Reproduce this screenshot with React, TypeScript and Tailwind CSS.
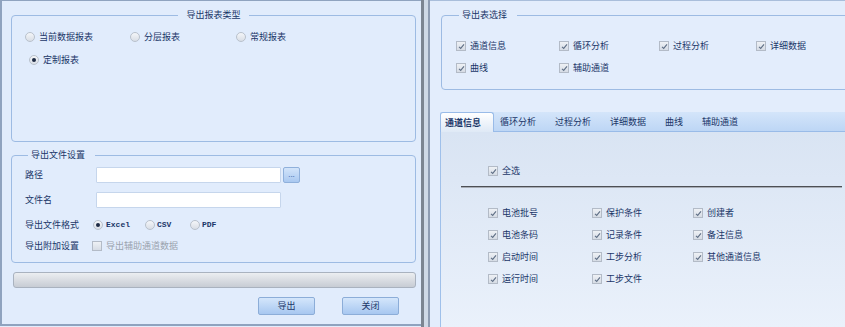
import React from "react";

const font = { fontFamily: '"Noto Sans CJK SC", "Noto Sans", sans-serif' };

const tableOptions = [
  ["通道信息", "循环分析", "过程分析", "详细数据"],
  ["曲线", "辅助通道"],
];

const tabs = ["循环分析", "过程分析", "详细数据", "曲线", "辅助通道"];

const fields = [
  ["电池批号", "保护条件", "创建者"],
  ["电池条码", "记录条件", "备注信息"],
  ["启动时间", "工步分析", "其他通道信息"],
  ["运行时间", "工步文件"],
];

function Radio({ checked = false }: { checked?: boolean }) {
  return (
    <span className="w-[10px] h-[10px] rounded-full border border-[#b9c1cc] bg-gradient-to-b from-[#f4f6f9] to-[#d9dee6] flex items-center justify-center shrink-0">
      {checked && <span className="w-[4px] h-[4px] rounded-full bg-[#1d2a44]" />}
    </span>
  );
}

function Check({ checked = true }: { checked?: boolean }) {
  return (
    <span className="w-[10px] h-[10px] border border-[#b3bbc7] bg-gradient-to-b from-[#eef1f5] to-[#d6dce5] flex items-center justify-center shrink-0">
      {checked && (
        <svg width="7" height="7" viewBox="0 0 7 7">
          <path d="M1 3.8 L2.7 5.4 L6 1.4" fill="none" stroke="#5f6f86" strokeWidth="1.1" />
        </svg>
      )}
    </span>
  );
}

function CheckLabel({ label }: { label: string }) {
  return (
    <div className="flex items-center gap-[4px] h-[16px]">
      <Check />
      <span>{label}</span>
    </div>
  );
}

const mono = { fontFamily: '"Liberation Mono", monospace' };

function LeftPanel() {
  return (
    <div className="w-[421px] h-[326px] shrink-0 flex flex-col border-l-2 border-t border-b-2 border-[#8fa3bf] bg-[#e1ecfc] pl-[9px] pr-[5px]">
      {/* 导出报表类型 */}
      <fieldset className="mt-[7px] h-[134px] border border-[#9dbbe3] rounded-[4px] px-[13px]">
        <legend className="mx-auto px-[8px] leading-[14px]">导出报表类型</legend>
        <div className="grid grid-cols-[105px_106px_105px] gap-y-[7px] pt-[7px]">
          {["当前数据报表", "分层报表", "常规报表"].map((t) => (
            <div key={t} className="flex items-center gap-[4px] h-[16px]">
              <Radio />
              <span>{t}</span>
            </div>
          ))}
          <div className="flex items-center gap-[4px] h-[16px] pl-[4px]">
            <Radio checked />
            <span>定制报表</span>
          </div>
        </div>
      </fieldset>

      {/* 导出文件设置 */}
      <fieldset className="mt-[6px] h-[115px] border border-[#9dbbe3] rounded-[4px] px-[13px]">
        <legend className="ml-[3px] pl-[3px] pr-[10px] leading-[14px]">导出文件设置</legend>
        <div className="flex flex-col pt-[5px]">
          <div className="flex items-center h-[16px]">
            <span className="w-[71px]">路径</span>
            <span className="w-[185px] h-[16px] bg-white border border-[#c6d6ec] rounded-[1px]" />
            <span className="ml-[2px] w-[17px] h-[16px] rounded-[2px] border border-[#8fb0db] bg-gradient-to-b from-[#d2e4fa] to-[#a9c8f0] flex items-center justify-center text-[#4f78b5] text-[8px] leading-none pb-[3px]">
              ...
            </span>
          </div>
          <div className="flex items-center h-[16px] mt-[9px]">
            <span className="w-[71px]">文件名</span>
            <span className="w-[185px] h-[16px] bg-white border border-[#c6d6ec] rounded-[1px]" />
          </div>
          <div className="flex items-center h-[16px] mt-[9px]">
            <span className="w-[68px]">导出文件格式</span>
            <div className="flex items-center gap-[3px] w-[52px]">
              <Radio checked />
              <span className="text-[8px] font-bold" style={mono}>Excel</span>
            </div>
            <div className="flex items-center gap-[2px] w-[45px]">
              <Radio />
              <span className="text-[8px] font-bold" style={mono}>CSV</span>
            </div>
            <div className="flex items-center gap-[2px]">
              <Radio />
              <span className="text-[8px] font-bold" style={mono}>PDF</span>
            </div>
          </div>
          <div className="flex items-center h-[16px] mt-[5px]">
            <span className="w-[67px]">导出附加设置</span>
            <Check checked={false} />
            <span className="ml-[4px] text-[#9aa3ae]">导出辅助通道数据</span>
          </div>
        </div>
      </fieldset>

      {/* progress */}
      <div className="mt-[9px] ml-[2px] h-[16px] rounded-[3px] border border-[#a9b2bf] bg-gradient-to-b from-[#eceef1] to-[#c7ccd4]" />

      {/* buttons */}
      <div className="mt-[9px] flex gap-[27px] pl-[247px]">
        {["导出", "关闭"].map((b) => (
          <span
            key={b}
            className="w-[57px] h-[18px] rounded-[2px] border border-[#8cadd8] bg-gradient-to-b from-[#d4e6fb] to-[#a7c7f0] flex items-center justify-center"
          >
            {b}
          </span>
        ))}
      </div>
    </div>
  );
}

function RightPanel() {
  return (
    <div className="flex-1 h-[327px] overflow-hidden flex flex-col border-t border-[#a9bedb] bg-[#e3edfc]">
      {/* 导出表选择 */}
      <fieldset className="ml-[11px] mt-[7px] w-[430px] h-[82px] border border-[#9dbbe3] rounded-[4px] pl-[14px]">
        <legend className="ml-[3px] pl-[3px] pr-[10px] leading-[14px]">导出表选择</legend>
        <div className="flex flex-col gap-[6px] pt-[16px]">
          {tableOptions.map((row, i) => (
            <div key={i} className="grid grid-cols-[103px_100px_97px_100px]">
              {row.map((t) => (
                <CheckLabel key={t} label={t} />
              ))}
            </div>
          ))}
        </div>
      </fieldset>

      {/* tabs */}
      <div className="mt-[22px] ml-[10px] flex flex-col flex-1">
        <div className="flex h-[20px] bg-gradient-to-b from-[#d4e5fa] to-[#bdd6f5] border-b border-[#99bbe8]">
          <span className="w-[54px] h-[21px] -mb-[1px] border border-b-0 border-[#99bbe8] rounded-t-[3px] bg-gradient-to-b from-[#ffffff] to-[#dde8f5] font-bold flex items-center pl-[4px]">
            通道信息
          </span>
          <div className="flex items-center pl-[6px]">
            {tabs.map((t) => (
              <span key={t} className="pr-[19px]">
                {t}
              </span>
            ))}
          </div>
        </div>
        <div className="flex-1 border-l border-[#9fc0ea] bg-gradient-to-b from-[#d9e4f3] to-[#eaf1fb]">
          <div className="pt-[31px] pl-[47px]">
            <CheckLabel label="全选" />
          </div>
          <div className="ml-[20px] mt-[7px] w-[381px] h-[2px] border-t border-[#4d4f54] border-b border-b-[#a8adb5]" />
          <div className="mt-[17px] pl-[47px] flex flex-col gap-[6px]">
            {fields.map((row, i) => (
              <div key={i} className="grid grid-cols-[104px_101px_120px]">
                {row.map((t) => (
                  <CheckLabel key={t} label={t} />
                ))}
              </div>
            ))}
          </div>
        </div>
      </div>
    </div>
  );
}

export default function App() {
  return (
    <div className="w-[845px] h-[327px] flex bg-[#e3edfc] text-[9px] text-[#1a3668] overflow-hidden" style={font}>
      <LeftPanel />
      {/* splitter */}
      <div className="w-[9px] h-[327px] shrink-0 border-l-[3px] border-[#7c8591] border-r-2 border-r-[#8e9cb2] bg-[#cfd9e6]" />
      <RightPanel />
    </div>
  );
}
